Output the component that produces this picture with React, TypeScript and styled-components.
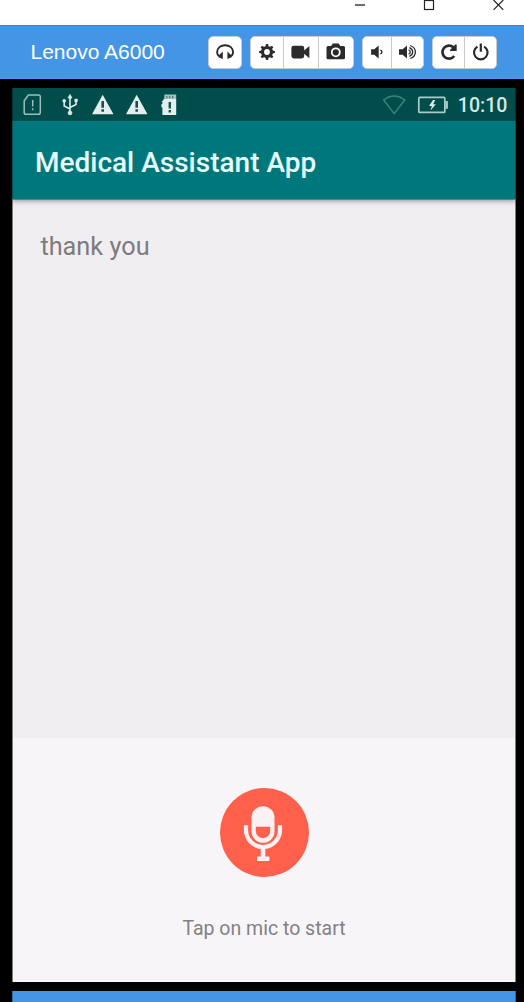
import React from "react";
import styled, { createGlobalStyle } from "styled-components";

const GlobalStyle = createGlobalStyle`
  * { box-sizing: border-box; }
  body { margin: 0; background: #000; overflow: hidden; }
  svg { display: block; flex: none; }
`;

const Window = styled.div`
  width: 524px;
  height: 1002px;
  background: #000;
  display: flex;
  flex-direction: column;
`;

const TitleBar = styled.div`
  height: 25px;
  flex: none;
  background: #fff;
  display: flex;
  justify-content: flex-end;
  align-items: flex-start;
  gap: 57px;
  padding-right: 20px;
`;

const DeviceBar = styled.div`
  height: 54px;
  flex: none;
  background: #4595e6;
  border-top: 1px solid #2f88e0;
  border-bottom: 1px solid #4d9ff0;
  display: flex;
  align-items: center;
  padding: 0 27px 0 30.5px;
`;

const DeviceName = styled.div`
  flex: 1;
  color: #fff;
  font: 21px/24px "Liberation Sans", Arial, sans-serif;
  white-space: nowrap;
`;

const ButtonGroup = styled.div<{ $gap: number }>`
  display: flex;
  height: 33px;
  margin-left: ${(p) => p.$gap}px;
  border: 1px solid #c6cdd4;
  border-radius: 5px;
  background: #fff;
  overflow: hidden;
`;

const ToolButton = styled.button<{ $w: number }>`
  width: ${(p) => p.$w}px;
  padding: 0;
  border: 0;
  background: #fff;
  display: flex;
  align-items: center;
  justify-content: center;
  & + & { border-left: 1px solid #c9c9c9; }
`;

const Screen = styled.div`
  margin: 9px 8px 0 12px;
  height: 894px;
  flex: none;
  display: flex;
  flex-direction: column;
  background: #f0eef1;
  border: 0 solid #7f7f80;
  border-width: 0 1px;
`;

const StatusBar = styled.div`
  height: 33px;
  flex: none;
  background: #004d4b;
  display: flex;
  align-items: center;
  margin: 0 -1px;
  padding: 0 8.5px 0 9.6px;
  box-shadow: inset 1px 0 #003331, inset -1px 0 #003331;
`;

const StatusIcons = styled.div`
  display: flex;
  align-items: center;
  gap: 10px;
  flex: 1;
`;

const Clock = styled.div`
  margin-left: 8.5px;
  color: #d5e8e6;
  font: 500 19.6px/24px Roboto, sans-serif;
  padding-top: 3px;
`;

const AppBar = styled.div`
  height: 79px;
  flex: none;
  background: #00787b;
  border-bottom: 1px solid #3d9295;
  box-shadow: 0 1px 5px rgba(0, 0, 0, 0.38), inset 1px 0 #004c4e, inset -1px 0 #004c4e;
  clip-path: inset(0 0 -12px 0);
  display: flex;
  align-items: center;
  margin: 0 -1px;
  padding: 5px 0 0 23px;
  position: relative;
`;

const AppTitle = styled.h1`
  margin: 0;
  color: #e6fbfb;
  font: 500 28px/34px Roboto, sans-serif;
  white-space: nowrap;
`;

const Transcript = styled.div`
  flex: 1;
  padding: 30px 27.4px;
  color: #7c7b7d;
  font: 400 25.3px/34px Roboto, sans-serif;
`;

const MicPanel = styled.div`
  height: 244px;
  flex: none;
  background: #f7f5f8;
  border-bottom: 1px solid #fff;
  display: flex;
  flex-direction: column;
  align-items: center;
  padding-top: 50px;
`;

const MicButton = styled.button`
  width: 89px;
  height: 89px;
  border: 0;
  padding: 0;
  border-radius: 50%;
  background: #ff604c;
`;

const Hint = styled.div`
  margin-top: 39px;
  color: #828183;
  font: 400 19.5px/26px Roboto, sans-serif;
`;

const Footer = styled.div`
  margin: 9px 8px 0 12px;
  height: 11px;
  flex: none;
  background: #4595e6;
  border: 0 solid #2f6aa6;
  border-width: 0 1px;
`;

const INK = "#2b2b2b";

const Tool = ({ children }: { children: React.ReactNode }) => (
  <svg width="20" height="20" viewBox="0 0 20 20" fill={INK}>
    {children}
  </svg>
);

const Headphones = () => (
  <Tool>
    <path d="M4 14C2.6 12.8 2.1 11.6 2.1 10.2C2.1 6 5.6 3.2 10.1 3.2s8 2.8 8 7c0 1.4-.5 2.6-1.9 3.8" fill="none" stroke={INK} strokeWidth="1.9" />
    <path d="M3.2 14L7.8 9.6V17L3.6 15.2zM17 14L12.4 9.6V17L16.6 15.2z" />
  </Tool>
);

const Gear = () => (
  <Tool>
    <circle cx="10" cy="10" r="4.5" fill="none" stroke={INK} strokeWidth="3.2" />
    {[0, 45, 90, 135, 180, 225, 270, 315].map((a) => (
      <path key={a} d="M8.4 5L8.9 2.1H11.1L11.6 5z" transform={`rotate(${a} 10 10)`} />
    ))}
  </Tool>
);

const Video = () => (
  <Tool>
    <rect x=".4" y="3.7" width="12.8" height="12.8" rx="2.4" />
    <path d="M12.2 9.2L18.4 4v12.2L12.2 11z" />
  </Tool>
);

const Camera = () => (
  <Tool>
    <path d="M2 4H5.2L6.7 1.4H12.8L14.2 4H17.5Q19 4 19 5.6V15.7Q19 17.3 17.5 17.3H2Q.5 17.3.5 15.7V5.6Q.5 4 2 4z" />
    <circle cx="9.8" cy="10.3" r="4" fill={INK} stroke="#fff" strokeWidth="1.8" />
  </Tool>
);

const VolumeLow = () => (
  <Tool>
    <path d="M4.1 7.2H7.3L11.7 3.5V16.5L7.3 12.8H4.1z" />
    <path d="M13.2 8.1C15.5 8.4 15.5 11.6 13.2 11.9" fill="none" stroke={INK} strokeWidth="1.4" />
  </Tool>
);

const VolumeHigh = () => (
  <Tool>
    <path d="M1 7.2H4.6L9 3.5V16.5L4.6 12.8H1z" />
    <path d="M10.6 7.8C12.8 8.6 12.8 11.4 10.6 12.2M11.3 5.7C15.8 7.3 15.8 12.7 11.3 14.3M12.2 3.5C19.1 5.8 19.1 14.2 12.2 16.5" fill="none" stroke={INK} strokeWidth="1.3" />
  </Tool>
);

const Reload = () => (
  <Tool>
    <path d="M15.2 14A6.5 6.5 0 1 1 14.5 5.5" fill="none" stroke={INK} strokeWidth="2.7" />
    <path d="M17.7 2.4V9H11V7.9L16.3 2.4z" />
  </Tool>
);

const Power = () => (
  <Tool>
    <path d="M6.5 4.6A6.8 6.8 0 1 0 13.1 4.6" fill="none" stroke={INK} strokeWidth="2.2" />
    <path d="M8.7 1.4h2.2v8.4H8.7z" />
  </Tool>
);

const Warning = () => (
  <svg width="24" height="24" viewBox="0 0 24 24">
    <path d="M12.7 1.8L23.5 21.2H2z" fill="#e3efed" />
    <path d="M11.4 8h2.6v6.7h-2.6zM11.4 16.3h2.6v2.5h-2.6z" fill="#17504e" />
  </svg>
);

export default function App() {
  return (
    <Window>
      <GlobalStyle />
      <TitleBar>
        <svg width="12" height="12" viewBox="0 0 12 12">
          <path d="M1 5h10" stroke="#6b6b6b" strokeWidth="2" />
        </svg>
        <svg width="12" height="12" viewBox="0 0 12 12">
          <rect x="1.5" y=".5" width="9" height="9" fill="none" stroke="#222" strokeWidth="1.2" />
        </svg>
        <svg width="12" height="12" viewBox="0 0 12 12">
          <path d="M1.5 0L11.3 9.8M11.3 0L1.5 9.8" stroke="#222" strokeWidth="1.2" />
        </svg>
      </TitleBar>
      <DeviceBar>
        <DeviceName>Lenovo A6000</DeviceName>
        <ButtonGroup $gap={0}>
          <ToolButton $w={32}><Headphones /></ToolButton>
        </ButtonGroup>
        <ButtonGroup $gap={8}>
          <ToolButton $w={32}><Gear /></ToolButton>
          <ToolButton $w={35}><Video /></ToolButton>
          <ToolButton $w={35}><Camera /></ToolButton>
        </ButtonGroup>
        <ButtonGroup $gap={8}>
          <ToolButton $w={28}><VolumeLow /></ToolButton>
          <ToolButton $w={32}><VolumeHigh /></ToolButton>
        </ButtonGroup>
        <ButtonGroup $gap={8}>
          <ToolButton $w={31}><Reload /></ToolButton>
          <ToolButton $w={32}><Power /></ToolButton>
        </ButtonGroup>
      </DeviceBar>
      <Screen>
        <StatusBar>
          <StatusIcons>
            <svg width="24" height="24" viewBox="0 0 24 24" fill="none" stroke="#9cbfbb" strokeWidth="1.5">
              <path d="M6.4 2H16.5Q18.3 2 18.3 3.8V19.5Q18.3 21.3 16.5 21.3H4Q2.2 21.3 2.2 19.5V7.8z" />
              <path d="M10.7 7v6.5M10.7 15.3v2" />
            </svg>
            <svg width="24" height="24" viewBox="0 0 24 24" fill="#dcebe9" stroke="#dcebe9" strokeWidth="1.6">
              <path d="M14 19.5V3.5M14 16L8.2 13V8.5M14 14.5L20 11.5V7.5" fill="none" />
              <path d="M14 1.5L16 5H12z" strokeWidth=".8" />
              <circle cx="14" cy="19.9" r="2" strokeWidth=".6" />
              <circle cx="8.2" cy="7.8" r="1.5" strokeWidth=".6" />
              <path d="M18.7 6h2.8v2.8h-2.8z" strokeWidth=".4" />
            </svg>
            <Warning />
            <Warning />
            <svg width="24" height="24" viewBox="-1 0 24 24">
              <path d="M5.5 1.5H17.2V6.2H5.2z" fill="#a7c4c1" />
              <path d="M5 6H17.2V21.9H3.4V14.3H2.4V11.5L3.4 10.5V9H2.6z" fill="#e3efed" />
              <path d="M9.6 9h2.4v6.5H9.6zM9.6 17h2.4v2.4H9.6z" fill="#17504e" />
              <path d="M7.2 3h1.3v2.2H7.2zM10 3h1.3v2.2H10zM13 3h1.3v2.2H13z" fill="#4c807d" />
            </svg>
          </StatusIcons>
          <svg width="26" height="24" viewBox="0 0 26 24" fill="none" stroke="#3b8480" strokeWidth="1.5">
            <path d="M2.6 7Q13.2 -1.2 23.8 7L13.2 20.6z" />
          </svg>
          <svg width="42" height="24" viewBox="0 0 42 24">
            <rect x="11.8" y="4.4" width="26" height="15" rx="1" fill="none" stroke="#aacbc7" strokeWidth="1.7" />
            <rect x="38.3" y="8" width="2.6" height="7.8" fill="#aacbc7" />
            <path d="M26 7L22 13H24.8L23.5 17.6L28.9 11.2H26.1L28.3 7z" fill="#d9ebe9" />
          </svg>
          <Clock>10:10</Clock>
        </StatusBar>
        <AppBar>
          <AppTitle>Medical Assistant App</AppTitle>
        </AppBar>
        <Transcript>thank you</Transcript>
        <MicPanel>
          <MicButton aria-label="Record">
            <svg width="89" height="89" viewBox="0 0 89 89">
              <rect x="31.5" y="18.2" width="23" height="36.6" rx="11.5" fill="#faf1f2" />
              <path d="M35.8 38.7H50.2V43A7.2 7.2 0 0 1 35.8 43z" fill="#ff604c" />
              <path d="M26 37.3v4.7A17 17 0 0 0 60 42V37.3" fill="none" stroke="#faf1f2" strokeWidth="4.2" />
              <path d="M43 59v12M37 70.7h12.4" fill="none" stroke="#faf1f2" strokeWidth="4.6" />
            </svg>
          </MicButton>
          <Hint>Tap on mic to start</Hint>
        </MicPanel>
      </Screen>
      <Footer />
    </Window>
  );
}
